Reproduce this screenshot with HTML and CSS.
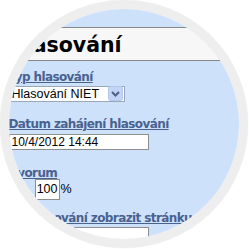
FILE: index.html
```html
<!DOCTYPE html>
<html lang="cs">
<head>
<meta charset="utf-8">
<title>Hlasování</title>
<link rel="stylesheet" href="styles.css">
</head>
<body>
<div class="lens">
  <div class="page">
    <div class="top"></div>
    <div class="titlebar"><h1>Hlasování</h1></div>
    <div class="form">
      <div class="field f-typ">
        <span class="label">Typ hlasování</span>
        <div class="select">
          <span class="sel-text">Hlasování NIET</span>
          <span class="arrow"><svg width="15" height="15" viewBox="0 0 15 15"><rect x="0.5" y="0.5" width="14" height="14" rx="2" fill="#c3d5f6" stroke="#b3c7ec"/><path d="M4 6 L7.5 9.5 L11 6" fill="none" stroke="#4d6185" stroke-width="2"/></svg></span>
        </div>
      </div>
      <div class="field f-datum">
        <span class="label">Datum zahájení hlasování</span>
        <div class="input wide">10/4/2012 14:44</div>
      </div>
      <div class="field f-kvorum">
        <span class="label">Kvorum</span>
        <div class="row"><div class="input small">100</div><span class="pct">%</span></div>
      </div>
      <div class="field f-po">
        <span class="label">Po hlasování zobrazit stránku</span>
        <div class="input wide tall"></div>
      </div>
    </div>
  </div>
</div>
</body>
</html>
```
FILE: styles.css
```css
html, body {
  margin: 0;
  padding: 0;
  background: #ffffff;
  width: 249px;
  height: 249px;
  overflow: hidden;
}
.lens {
  width: 230px;
  height: 230px;
  margin: -0.5px 0 0 -0.5px;
  border: 9.5px solid #eeeeee;
  border-radius: 50%;
  overflow: hidden;
  box-shadow: 0 0 1px rgba(0,0,0,0.12);
}
.page {
  margin: -9px 0 0 -9px;
  width: 249px;
  height: 260px;
  background: #cde1fa;
}
.top {
  height: 27px;
}
.titlebar {
  border-top: 1px solid #888888;
  border-bottom: 1px solid #888888;
  background: #f7f7f7;
  height: 32px;
}
.titlebar h1 {
  margin: 0;
  padding: 2px 0 0 9px;
  line-height: 30px;
  font-family: "DejaVu Sans", sans-serif;
  font-weight: bold;
  font-size: 20.5px;
  color: #000;
}
.form {
  padding-left: 9px;
}
.field {
  display: flex;
  flex-direction: column;
  align-items: flex-start;
}
.label {
  font-family: "DejaVu Sans", sans-serif;
  font-weight: bold;
  font-size: 12px;
  letter-spacing: -0.6px;
  line-height: 14px;
  color: #4a6290;
  text-decoration: underline;
}
.f-typ { margin-top: 9px; }
.f-typ .label { margin-bottom: 2px; }
.f-datum { margin-top: 15px; }
.f-datum .label { margin-bottom: 3px; }
.f-kvorum { margin-top: 16px; }
.f-kvorum .label { margin-bottom: -1px; }
.f-po { margin-top: 11px; }
.f-po .label { margin-bottom: 2px; }
.select {
  width: 113px;
  height: 14px;
  border: 1px solid #9aa7ba;
  background: #fff;
  display: flex;
  align-items: center;
  justify-content: space-between;
  padding-right: 1px;
}
.sel-text, .input, .pct {
  font-family: "Liberation Sans", Arial, sans-serif;
  font-size: 12px;
  color: #000;
}
.sel-text { padding-left: 2px; line-height: 14px; font-size: 12.5px; }
.arrow { display: flex; }
.input {
  box-sizing: border-box;
  background: #fff;
  border: 1px solid #8e8e8e;
  height: 16px;
  line-height: 14px;
  padding: 0 2px;
}
.input.wide { width: 140px; }
.input.tall { height: 20px; }
.row {
  display: flex;
  align-items: center;
  padding-left: 26px;
}
.input.small {
  width: 25px;
  height: 21px;
  line-height: 19px;
  text-align: right;
  padding: 0 1px;
  font-size: 12.5px;
}
.pct { margin-left: 1px; font-size: 12.5px; }
```
